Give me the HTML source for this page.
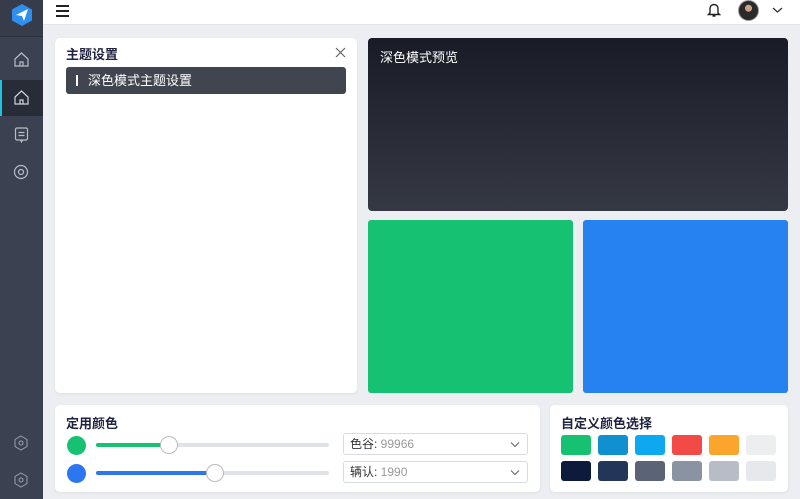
<!DOCTYPE html>
<html><head><meta charset="utf-8"><style>
*{margin:0;padding:0;box-sizing:border-box}
body{width:800px;height:499px;overflow:hidden;background:#eceef2;font-family:"Liberation Sans","Noto Sans CJK SC",sans-serif;position:relative}
.abs{position:absolute}
.side{left:0;top:0;width:43px;height:499px;background:#3b4150}
.top{left:43px;top:0;width:757px;height:25px;background:#fff;border-bottom:1px solid #e2e4e8}
.card{background:#fff;border-radius:5px;box-shadow:0 1px 3px rgba(0,0,0,.06)}
.t{font-size:13px;font-weight:bold;color:#1f2340}
.sw{position:absolute;width:30px;height:20px;border-radius:3px}
</style></head><body>
<div class="abs side">
  <div class="abs" style="left:0;top:0;width:43px;height:37px;background:#363c4a;border-bottom:1px solid #2c313c"></div>
  <svg class="abs" style="left:10px;top:3px" width="24" height="24" viewBox="0 0 24 24"><path d="M12 1 L22 6.5 V17.5 L12 23 L2 17.5 V6.5Z" fill="#2f8ff0"/><path d="M6 12 L18 6 L14 18 L12 13Z" fill="#fff"/></svg>
  <div class="abs" style="left:0;top:80px;width:43px;height:36px;background:#272c37"></div>
  <div class="abs" style="left:0;top:80px;width:2px;height:36px;background:#1fc3e0"></div>
  <svg class="abs" style="left:13px;top:51px" width="17" height="17" viewBox="0 0 17 17" fill="none" stroke="#b8bcc6" stroke-width="1.2"><path d="M2 8 L8.5 2 L15 8 V15 H2Z M7 15 V11 H10 V15"/></svg>
  <svg class="abs" style="left:13px;top:89px" width="17" height="17" viewBox="0 0 17 17" fill="none" stroke="#d0d3da" stroke-width="1.2"><path d="M2 8 L8.5 2 L15 8 V15 H2Z M7 15 V11 H10 V15"/></svg>
  <svg class="abs" style="left:13px;top:126px" width="17" height="17" viewBox="0 0 17 17" fill="none" stroke="#b8bcc6" stroke-width="1.2"><rect x="2.5" y="2" width="12" height="12" rx="1.5"/><path d="M5.5 6.5H11.5M5.5 9.5H11.5M7.5 14L8.5 16L9.5 14"/></svg>
  <svg class="abs" style="left:12px;top:163px" width="18" height="18" viewBox="0 0 18 18" fill="none" stroke="#b8bcc6" stroke-width="1.2"><circle cx="9" cy="9" r="6.5"/><circle cx="9" cy="9" r="2.5"/></svg>
  <svg class="abs" style="left:12px;top:434px" width="18" height="18" viewBox="0 0 18 18" fill="none" stroke="#9aa0ac" stroke-width="1"><path d="M9 2 L15 5.5 V12.5 L9 16 L3 12.5 V5.5Z"/><circle cx="9" cy="9" r="2"/></svg>
  <svg class="abs" style="left:12px;top:471px" width="18" height="18" viewBox="0 0 18 18" fill="none" stroke="#9aa0ac" stroke-width="1"><path d="M9 2 L15 5.5 V12.5 L9 16 L3 12.5 V5.5Z"/><circle cx="9" cy="9" r="2"/></svg>
</div>
<div class="abs top">
  <div class="abs" style="left:13px;top:5px;width:13px;height:2px;background:#222;box-shadow:0 5px 0 #222,0 10px 0 #222"></div>
  <svg class="abs" style="left:664px;top:2px" width="14" height="16" viewBox="0 0 14 16" fill="none" stroke="#222" stroke-width="1.4"><path d="M3 11 V6.5 A4 4 0 0 1 11 6.5 V11 L12.5 12.5 H1.5Z M5.5 14 H8.5"/></svg>
  <div class="abs" style="left:695px;top:0;width:21px;height:21px;border-radius:50%;background:radial-gradient(circle at 50% 38%,#c9a48c 0 22%,#2a2a2a 24% 100%);border:1px solid #999"></div>
  <svg class="abs" style="left:729px;top:6px" width="11" height="8" viewBox="0 0 11 8" fill="none" stroke="#333" stroke-width="1.3"><path d="M1 2 L5.5 6 L10 2"/></svg>
</div>
<div class="abs card" style="left:55px;top:38px;width:302px;height:355px">
  <div class="abs t" style="left:11px;top:6px">主题设置</div>
  <svg class="abs" style="left:280px;top:9px" width="11" height="11" viewBox="0 0 11 11" stroke="#666" stroke-width="1.2"><path d="M1 1L10 10M10 1L1 10"/></svg>
  <div class="abs" style="left:11px;top:29px;width:280px;height:27px;background:#40454f;border-radius:3px;color:#fff;font-size:13px;line-height:27px;padding-left:22px">深色模式主题设置</div>
  <div class="abs" style="left:21px;top:37px;width:2px;height:11px;background:#fff"></div>
</div>
<div class="abs" style="left:368px;top:38px;width:420px;height:173px;border-radius:4px;background:linear-gradient(180deg,#191c27,#353944)">
  <div class="abs" style="left:12px;top:9px;color:#fff;font-size:13px">深色模式预览</div>
</div>
<div class="abs" style="left:368px;top:220px;width:205px;height:173px;border-radius:3px;background:#17c172"></div>
<div class="abs" style="left:583px;top:220px;width:205px;height:173px;border-radius:3px;background:#2582f0"></div>
<div class="abs card" style="left:55px;top:405px;width:485px;height:87px">
  <div class="abs t" style="left:11px;top:8px">定用颜色</div>
  <div class="abs" style="left:12px;top:31px;width:19px;height:19px;border-radius:50%;background:#17c172"></div>
  <div class="abs" style="left:41px;top:38px;width:233px;height:4px;border-radius:2px;background:#dfe2e6"></div>
  <div class="abs" style="left:41px;top:38px;width:74px;height:4px;border-radius:2px;background:#17c172"></div>
  <div class="abs" style="left:105px;top:31px;width:18px;height:18px;border-radius:50%;background:#fff;border:1px solid #bbb"></div>
  <div class="abs" style="left:12px;top:59px;width:19px;height:19px;border-radius:50%;background:#2c77f0"></div>
  <div class="abs" style="left:41px;top:66px;width:233px;height:4px;border-radius:2px;background:#dfe2e6"></div>
  <div class="abs" style="left:41px;top:66px;width:120px;height:4px;border-radius:2px;background:#2c77f0"></div>
  <div class="abs" style="left:151px;top:59px;width:18px;height:18px;border-radius:50%;background:#fff;border:1px solid #bbb"></div>
  <div class="abs" style="left:288px;top:28px;width:185px;height:22px;border:1px solid #d8dbe0;border-radius:3px;font-size:12px;line-height:20px;padding-left:6px;color:#333">色谷: <span style="color:#999">99966</span></div>
  <div class="abs" style="left:288px;top:56px;width:185px;height:22px;border:1px solid #d8dbe0;border-radius:3px;font-size:12px;line-height:20px;padding-left:6px;color:#333">辆认: <span style="color:#999">1990</span></div>
  <svg class="abs" style="left:455px;top:36px" width="10" height="7" viewBox="0 0 10 7" fill="none" stroke="#666" stroke-width="1.1"><path d="M1 1.5L5 5.5L9 1.5"/></svg>
  <svg class="abs" style="left:455px;top:64px" width="10" height="7" viewBox="0 0 10 7" fill="none" stroke="#666" stroke-width="1.1"><path d="M1 1.5L5 5.5L9 1.5"/></svg>
</div>
<div class="abs card" style="left:550px;top:405px;width:238px;height:87px">
  <div class="abs t" style="left:11px;top:8px">自定义颜色选择</div>
  <div class="sw" style="left:11px;top:30px;background:#17c172"></div>
  <div class="sw" style="left:48px;top:30px;background:#1190d0"></div>
  <div class="sw" style="left:85px;top:30px;background:#0ea8f0"></div>
  <div class="sw" style="left:122px;top:30px;background:#f24a46"></div>
  <div class="sw" style="left:159px;top:30px;background:#fca52c"></div>
  <div class="sw" style="left:196px;top:30px;background:#eceef0"></div>
  <div class="sw" style="left:11px;top:56px;background:#0e1a3c"></div>
  <div class="sw" style="left:48px;top:56px;background:#24355a"></div>
  <div class="sw" style="left:85px;top:56px;background:#5b6477"></div>
  <div class="sw" style="left:122px;top:56px;background:#8a93a2"></div>
  <div class="sw" style="left:159px;top:56px;background:#b7bcc6"></div>
  <div class="sw" style="left:196px;top:56px;background:#e6e8eb"></div>
</div>
</body></html>
